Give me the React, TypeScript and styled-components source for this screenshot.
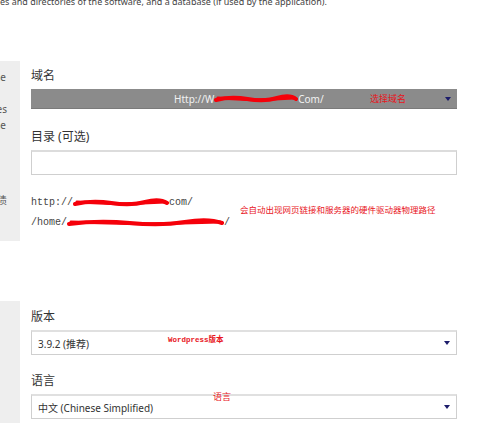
import styled, { createGlobalStyle } from 'styled-components'

const GlobalStyle = createGlobalStyle`
  body {
    margin: 0;
    background: #fff;
    font-family: "Noto Sans", "Noto Sans CJK SC", sans-serif;
    color: #333;
    overflow: hidden;
  }
`

const Page = styled.div`
  width: 500px;
  height: 423px;
  overflow: hidden;
`

const Intro = styled.p`
  margin: -5px 0 0;
  font-size: 9px;
  line-height: 14px;
  color: #444;
  white-space: nowrap;
`

const Section = styled.div<{ $top: number; $height?: number }>`
  display: flex;
  margin-top: ${({ $top }) => $top}px;
  height: ${({ $height }) => ($height ? `${$height}px` : 'auto')};
`

const Side = styled.div`
  width: 20px;
  flex: none;
  background: #eeeeee;
  padding-top: 8px;
  display: flex;
  flex-direction: column;
  font-size: 10px;
  color: #555;
  line-height: 16px;
`

const SideLine = styled.div<{ $pad: number; $gap?: number }>`
  display: flex;
  justify-content: flex-end;
  overflow: hidden;
  white-space: nowrap;
  height: 16px;
  padding-right: ${({ $pad }) => $pad}px;
  margin-top: ${({ $gap }) => $gap || 0}px;
`

const Main = styled.div<{ $top: number }>`
  width: 426px;
  margin-left: 11px;
  padding-top: ${({ $top }) => $top}px;
`

const Label = styled.div<{ $gap?: number }>`
  font-size: 12px;
  line-height: 18px;
  color: #333;
  margin-top: ${({ $gap }) => $gap || 0}px;
  margin-bottom: 4px;
`

const DomainSelect = styled.div`
  position: relative;
  height: 20px;
  box-sizing: border-box;
  background: #8b8b8b;
  border-bottom: 1px solid #7a7a7a;
  display: flex;
  align-items: center;
  padding: 0 5px 0 143px;
  font-size: 10px;
  color: #f2f2f2;
`

const Select = styled.div`
  position: relative;
  height: 25px;
  box-sizing: border-box;
  background: #fff;
  border: 1px solid #cfcfcf;
  border-top: 2px solid #e0e0e0;
  display: flex;
  align-items: center;
  padding: 0 5px 0 6px;
  font-size: 10px;
  color: #333;
`

const Value = styled.span`
  flex: 1;
  white-space: nowrap;
  display: flex;
  align-items: center;
`

const Input = styled.div`
  height: 25px;
  box-sizing: border-box;
  border: 1px solid #cfcfcf;
  border-top: 2px solid #dcdcdc;
  background: #fff;
`

const Arrow = styled.span<{ $gap?: number }>`
  width: 0;
  height: 0;
  border-left: 3px solid transparent;
  border-right: 3px solid transparent;
  border-top: 4px solid #1c1c6b;
  margin-right: 1px;
  margin-left: ${({ $gap }) => $gap || 0}px;
`

const Note = styled.span<{ $size?: number; $mono?: boolean }>`
  color: #e8141c;
  font-size: ${({ $size }) => $size || 9}px;
  font-family: ${({ $mono }) =>
    $mono
      ? '"Liberation Mono", "Noto Sans CJK SC", monospace'
      : '"Noto Sans CJK SC", sans-serif'};
  font-weight: ${({ $mono }) => ($mono ? 700 : 400)};
  white-space: nowrap;
`

const FloatNote = styled(Note)<{ $x: number; $y: number }>`
  position: absolute;
  left: ${({ $x }) => $x}px;
  top: ${({ $y }) => $y}px;
  line-height: 12px;
`

const Paths = styled.div`
  display: flex;
  align-items: center;
  margin-top: 18px;
`

const PathList = styled.div`
  display: flex;
  flex-direction: column;
  font-family: "Liberation Mono", monospace;
  font-size: 10px;
  color: #444;
  line-height: 20px;
`

const PathLine = styled.div`
  display: flex;
  align-items: center;
  white-space: nowrap;
`

const PathNote = styled(Note)`
  margin-left: 10px;
  margin-top: -8px;
`

const ScribbleSvg = styled.svg`
  display: block;
  flex: none;
`

const Scribble = ({ w }: { w: number }) => (
  <ScribbleSvg width={w} height={10} viewBox={`0 0 ${w} 10`}>
    <path
      d={`M2 6 Q ${w * 0.2} 2 ${w * 0.4} 5 T ${w * 0.75} 4 T ${w - 2} 5`}
      stroke="#f5000a"
      strokeWidth="4"
      fill="none"
      strokeLinecap="round"
    />
    <path
      d={`M4 4 L ${w * 0.5} 6 L ${w - 4} 4`}
      stroke="#f5000a"
      strokeWidth="3"
      fill="none"
      strokeLinecap="round"
    />
  </ScribbleSvg>
)

const App = () => {
  return (
    <Page>
      <GlobalStyle />
      <Intro>es and directories of the software, and a database (if used by the application).</Intro>

      <Section $top={52} $height={180}>
        <Side>
          <SideLine $pad={14}>the</SideLine>
          <SideLine $pad={13} $gap={16}>files</SideLine>
          <SideLine $pad={14}>the</SideLine>
          <SideLine $pad={13} $gap={59}>债</SideLine>
        </Side>
        <Main $top={6}>
          <Label>域名</Label>
          <DomainSelect>
            <Value>
              Http://W
              <Scribble w={84} />
              Com/
            </Value>
            <Note>选择域名</Note>
            <Arrow $gap={39} />
          </DomainSelect>

          <Label $gap={19}>目录 (可选)</Label>
          <Input />

          <Paths>
            <PathList>
              <PathLine>
                http://
                <Scribble w={96} />
                com/
              </PathLine>
              <PathLine>
                /home/
                <Scribble w={157} />/
              </PathLine>
            </PathList>
            <PathNote $size={8.5}>会自动出现网页链接和服务器的硬件驱动器物理路径</PathNote>
          </Paths>
        </Main>
      </Section>

      <Section $top={60}>
        <Side style={{ height: 140 }} />
        <Main $top={7}>
          <Label>版本</Label>
          <Select>
            <Value>3.9.2 (推荐)</Value>
            <FloatNote $mono $size={7.5} $x={136} $y={2}>
              Wordpress版本
            </FloatNote>
            <Arrow />
          </Select>

          <Label $gap={17}>语言</Label>
          <Select>
            <Value>中文 (Chinese Simplified)</Value>
            <FloatNote $size={9} $x={181} $y={-5}>
              语言
            </FloatNote>
            <Arrow />
          </Select>
        </Main>
      </Section>
    </Page>
  )
}

export default App
